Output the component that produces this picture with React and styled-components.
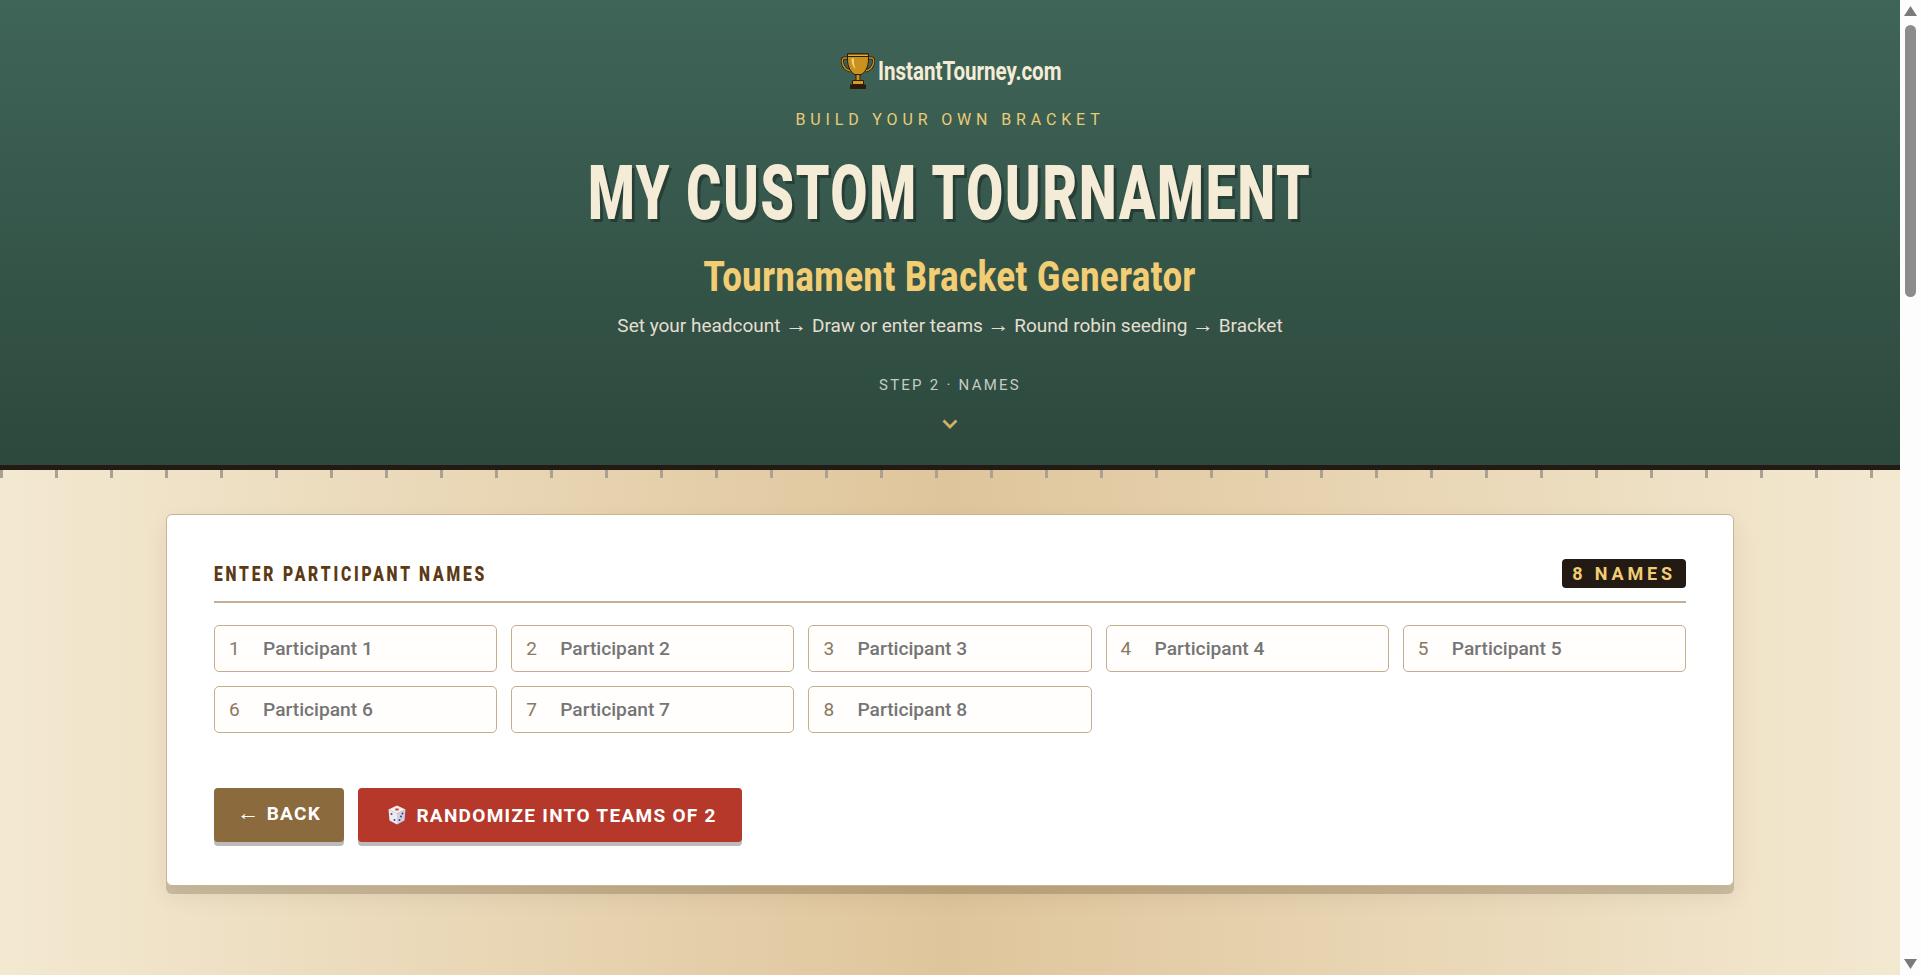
import React from "react";
import styled, { createGlobalStyle } from "styled-components";

const GlobalStyle = createGlobalStyle`
  html, body {
    margin: 0;
    height: 100%;
    overflow: hidden;
  }
  body {
    font-family: Roboto, "Liberation Sans", sans-serif;
  }
`;

const Frame = styled.div`
  display: flex;
  height: 100vh;
  overflow: hidden;
`;

const Page = styled.div`
  flex: 1;
  min-width: 0;
  background: linear-gradient(90deg, #f3e9d1 0%, #dfc59b 50%, #f3e9d1 100%);
`;

const ScrollRail = styled.div`
  flex: none;
  width: 21px;
  box-sizing: border-box;
  display: flex;
  flex-direction: column;
  align-items: center;
  padding: 6px 0;
  background: #fdfdfd;
`;

const RailArrow = styled.svg`
  display: block;
  flex: none;
  width: 13px;
  height: 10px;
  margin-top: ${(p) => (p.$down ? "auto" : "0")};
`;

const RailThumb = styled.div`
  width: 11px;
  height: 272px;
  margin-top: 9px;
  border-radius: 6px;
  background: #8c8c8c;
`;

const Hero = styled.header`
  box-sizing: border-box;
  height: 470px;
  border-bottom: 5px solid #231a14;
  background: linear-gradient(180deg, #3f6558 0%, #2d483d 100%);
  display: flex;
  flex-direction: column;
  align-items: center;
  padding-top: 52px;
  text-align: center;
`;

const Brand = styled.div`
  display: flex;
  align-items: center;
  gap: 3px;
  height: 37px;
`;

const BrandName = styled.span`
  display: block;
  width: 181px;
  font-weight: 700;
  font-size: 26px;
  white-space: nowrap;
  color: #f5ecd7;
  transform: scaleX(0.79);
  transform-origin: left center;
`;

const Eyebrow = styled.div`
  margin-top: 21px;
  font-size: 16px;
  line-height: 20px;
  letter-spacing: 4.85px;
  color: #ebcb78;
`;

const Title = styled.h1`
  margin: 21px 0 0;
  font-weight: 900;
  font-size: 76px;
  line-height: 84px;
  letter-spacing: 2.6px;
  white-space: nowrap;
  color: #f5ecd7;
  text-shadow: 4px 3px 0 rgba(0, 0, 0, 0.3);
  transform: scaleX(0.703);
`;

const Subtitle = styled.h2`
  margin: 15px 0 0;
  font-weight: 800;
  font-size: 42px;
  line-height: 54px;
  letter-spacing: 0.8px;
  white-space: nowrap;
  color: #f2cd74;
  transform: scaleX(0.813);
`;

const Steps = styled.p`
  margin: 9px 0 0;
  font-size: 19px;
  line-height: 26px;
  color: #e4dfd0;
`;

const Arrow = styled.span`
  font-family: "Liberation Sans", sans-serif;
  font-size: 22px;
  font-weight: 400;
  line-height: 0;
`;

const StepLabel = styled.div`
  margin-top: 37px;
  font-size: 15px;
  line-height: 18px;
  letter-spacing: 2.25px;
  color: #c2cdc5;
`;

const Chevron = styled.svg`
  display: block;
  margin-top: 25px;
  width: 16px;
  height: 10px;
`;

const Ruler = styled.div`
  height: 8px;
  background: repeating-linear-gradient(90deg, #a9a294 0 3px, transparent 3px 55px);
`;

const Main = styled.main`
  padding: 36px 166px 0;
`;

const Card = styled.section`
  box-sizing: border-box;
  height: 372px;
  padding: 44px 47px;
  background: #fff;
  border: 1px solid #c9b491;
  border-radius: 6px;
  box-shadow: 0 8px 0 rgba(60, 40, 10, 0.2), 0 10px 24px rgba(60, 40, 10, 0.08);
`;

const CardHead = styled.div`
  display: flex;
  align-items: center;
  justify-content: space-between;
  height: 29px;
  padding-bottom: 13px;
  border-bottom: 2px solid #c2b096;
  box-sizing: content-box;
`;

const CardTitle = styled.h3`
  margin: 0;
  font-weight: 900;
  font-size: 20px;
  letter-spacing: 3.62px;
  white-space: nowrap;
  color: #5c3a14;
  transform: scaleX(0.78);
  transform-origin: left center;
`;

const Badge = styled.span`
  display: block;
  box-sizing: border-box;
  height: 29px;
  padding: 0 10px;
  border-radius: 4px;
  background: #231a14;
  color: #f2cd74;
  font-weight: 700;
  font-size: 18px;
  line-height: 29px;
  letter-spacing: 3.85px;
`;

const NameGrid = styled.div`
  display: grid;
  grid-template-columns: repeat(5, 1fr);
  gap: 14px;
  margin-top: 22px;
`;

const NameField = styled.label`
  position: relative;
  display: block;
`;

const NameNumber = styled.span`
  position: absolute;
  left: 15px;
  top: 0;
  font-size: 19px;
  line-height: 47px;
  color: #8a7860;
`;

const NameInput = styled.input`
  box-sizing: border-box;
  display: block;
  width: 100%;
  height: 47px;
  padding: 0 14px 0 48px;
  border: 1px solid #c5ae8e;
  border-radius: 5px;
  background: #fffefc;
  font-family: Roboto, sans-serif;
  font-size: 19.200px;
  font-weight: 500;
  color: #3a2c1c;
  outline: none;
  &::placeholder {
    color: #757575;
    opacity: 1;
  }
`;

const Actions = styled.div`
  display: flex;
  gap: 14px;
  margin-top: 55px;
`;

const ActionButton = styled.button`
  display: flex;
  align-items: center;
  gap: 9px;
  height: 54px;
  padding: 0 ${(p) => (p.$tone === "back" ? "23.300px" : "25px")};
  border: none;
  border-radius: 4px;
  background: ${(p) => (p.$tone === "back" ? "#8b6a3e" : "#b5382a")};
  box-shadow: 0 4px 0 rgba(30, 30, 30, 0.3);
  color: #fff;
  font-family: Roboto, sans-serif;
  font-weight: 700;
  font-size: 19px;
  letter-spacing: 1.300px;
  white-space: nowrap;
`;

const BackLabel = styled.span`
  display: block;
  margin-top: -4px;
`;

const DiceIcon = styled.svg`
  display: block;
  margin-left: 4px;
  width: 20px;
  height: 20px;
`;

function Trophy() {
  return (
    <svg width="34" height="36" viewBox="0 0 34 36" aria-hidden="true">
      <path d="M8 5H3.500C1.500 5 1 7 1.500 10c.8 4 4 7 8 8" fill="none" stroke="#2b1c08" strokeWidth="3" />
      <path d="M26 5h4.500c2 0 2.500 2 2 5-.8 4-4 7-8 8" fill="none" stroke="#2b1c08" strokeWidth="3" />
      <path d="M8 5H3.500C1.500 5 1 7 1.500 10c.8 4 4 7 8 8" fill="none" stroke="#c98f1c" strokeWidth="1.400" />
      <path d="M26 5h4.500c2 0 2.500 2 2 5-.8 4-4 7-8 8" fill="none" stroke="#c98f1c" strokeWidth="1.400" />
      <path d="M6.500 1h21v5c0 8-3.500 14-7.500 15.500h-6C10 20 6.500 14 6.500 6z" fill="#c9921e" stroke="#2b1c08" strokeWidth="1" />
      <rect x="6.500" y="1" width="21" height="2.500" fill="#e2ae3a" stroke="#2b1c08" strokeWidth="1" />
      <path d="M10.500 5.500h2.500c-.4 4 .2 7.500 1.500 11-2.500-2.500-4-6.500-4-11z" fill="#f3d58a" />
      <path d="M15 21.500h4v6h-4z" fill="#c9921e" stroke="#2b1c08" strokeWidth="1" />
      <path d="M11.500 27.500h11v4h-11z" fill="#d69c25" stroke="#2b1c08" strokeWidth="1" />
      <rect x="9" y="31.500" width="16" height="4.500" fill="#2b1c08" />
    </svg>
  );
}

function Dice() {
  return (
    <DiceIcon viewBox="0 0 20 20" aria-hidden="true">
      <path d="M10 0.500 18.500 4.500 10 8.500 1.500 4.500z" fill="#f4f1f2" />
      <path d="M1.500 4.500 10 8.500V19.500L2.500 15.500z" fill="#eceaf2" />
      <path d="M18.500 4.500 10 8.500V19.500L17.500 15.500z" fill="#cfcfe0" />
      <ellipse cx="10" cy="4.500" rx="2" ry="1.200" fill="#e2504c" />
      <g fill="#3d3f8e">
        <circle cx="4.500" cy="9" r="1" />
        <circle cx="7.500" cy="15" r="1" />
        <circle cx="15.500" cy="8.500" r="1" />
        <circle cx="14" cy="11.500" r="1" />
        <circle cx="12.500" cy="15" r="1" />
      </g>
    </DiceIcon>
  );
}

const names = [1, 2, 3, 4, 5, 6, 7, 8];

export default function App() {
  return (
    <Frame>
      <GlobalStyle />
      <Page>
        <Hero>
          <Brand>
            <Trophy />
            <BrandName>InstantTourney.com</BrandName>
          </Brand>
          <Eyebrow>BUILD YOUR OWN BRACKET</Eyebrow>
          <Title>MY CUSTOM TOURNAMENT</Title>
          <Subtitle>Tournament Bracket Generator</Subtitle>
          <Steps>
            Set your headcount <Arrow>→</Arrow> Draw or enter teams <Arrow>→</Arrow> Round robin seeding <Arrow>→</Arrow> Bracket
          </Steps>
          <StepLabel>STEP 2 · NAMES</StepLabel>
          <Chevron viewBox="0 0 16 10">
            <path d="M1.500 1.500 8 8l6.500-6.500" fill="none" stroke="#d2b162" strokeWidth="2.800" />
          </Chevron>
        </Hero>
        <Ruler />
        <Main>
          <Card>
            <CardHead>
              <CardTitle>ENTER PARTICIPANT NAMES</CardTitle>
              <Badge>8 NAMES</Badge>
            </CardHead>
            <NameGrid>
              {names.map((n) => (
                <NameField key={n}>
                  <NameNumber>{n}</NameNumber>
                  <NameInput placeholder={`Participant ${n}`} />
                </NameField>
              ))}
            </NameGrid>
            <Actions>
              <ActionButton $tone="back">
                <BackLabel><Arrow>←</Arrow> BACK</BackLabel>
              </ActionButton>
              <ActionButton>
                <Dice />
                RANDOMIZE INTO TEAMS OF 2
              </ActionButton>
            </Actions>
          </Card>
        </Main>
      </Page>
      <ScrollRail>
        <RailArrow viewBox="0 0 13 10"><path d="M6.500 0 13 10H0z" fill="#7a7a7a" /></RailArrow>
        <RailThumb />
        <RailArrow $down viewBox="0 0 13 10"><path d="M6.500 10 13 0H0z" fill="#7a7a7a" /></RailArrow>
      </ScrollRail>
    </Frame>
  );
}
